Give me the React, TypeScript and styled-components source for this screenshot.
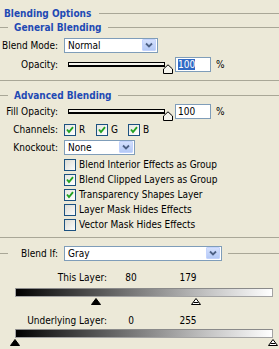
import React from 'react';
import styled, { createGlobalStyle } from 'styled-components';

const GlobalStyle = createGlobalStyle`
  html, body {
    margin: 0;
    padding: 0;
    background: #ece9d8;
  }
  body {
    font-family: "DejaVu Sans Condensed", "Liberation Sans", sans-serif;
    font-size: 10px;
    color: #000;
  }
`;

const Panel = styled.div`
  width: 279px;
  height: 349px;
  overflow: hidden;
  display: flex;
  flex-direction: column;
  background: #ece9d8;
`;

const Rule = styled.div<{ $w?: number }>`
  height: 1px;
  background: #a9a797;
  flex: ${(p) => (p.$w ? `0 0 ${p.$w}px` : '1')};
`;

const TitleRow = styled.div`
  display: flex;
  align-items: center;
  height: 15px;
  margin-top: 6px;
  padding-left: 4px;
`;

const Heading = styled.span<{ $gap?: number }>`
  font-weight: bold;
  color: #1f4ab4;
  white-space: nowrap;
  margin: 0 ${(p) => p.$gap ?? 8}px 0 ${(p) => p.$gap ?? 0}px;
`;

const GroupRow = styled.div<{ $top: number }>`
  display: flex;
  align-items: center;
  height: 12px;
  margin-top: ${(p) => p.$top}px;
`;

const FieldRow = styled.div<{ $top: number; $h?: number }>`
  display: flex;
  align-items: center;
  height: ${(p) => p.$h ?? 14}px;
  margin-top: ${(p) => p.$top}px;
`;

const Label = styled.span<{ $w?: number }>`
  width: ${(p) => p.$w ?? 58}px;
  flex: none;
  text-align: right;
  margin-right: 6px;
  white-space: nowrap;
`;

const SelectBox = styled.div<{ $w: number }>`
  box-sizing: border-box;
  width: ${(p) => p.$w}px;
  height: 15px;
  border: 1px solid #7f9db9;
  background: #fff;
  display: flex;
  align-items: center;
  justify-content: space-between;
  padding: 0 1px 0 3px;
  flex: none;
`;

const ArrowButton = styled.div`
  box-sizing: border-box;
  width: 14px;
  height: 12px;
  border: 1px solid #c3d3fd;
  border-radius: 1px;
  background: linear-gradient(#d4e0fd, #b4c9f6);
  display: flex;
  align-items: center;
  justify-content: center;
`;

const Select = ({ value, width }: { value: string; width: number }) => (
  <SelectBox $w={width}>
    <span>{value}</span>
    <ArrowButton>
      <svg width="8" height="6" viewBox="0 0 8 6">
        <path d="M1 1.5 L4 4.5 L7 1.5" fill="none" stroke="#4d6185" strokeWidth="1.8" />
      </svg>
    </ArrowButton>
  </SelectBox>
);

const SliderWrap = styled.div`
  position: relative;
  width: 106px;
  height: 14px;
  flex: none;
  display: flex;
  align-items: center;
`;

const SliderTrack = styled.div`
  box-sizing: border-box;
  margin-left: 4px;
  width: 97px;
  height: 5px;
  border: 1px solid #000;
  border-bottom-width: 2px;
  background: #f6f5ee;
  margin-top: -1px;
`;

const SliderKnob = styled.svg`
  position: absolute;
  left: 99px;
  top: 6px;
`;

const Slider = () => (
  <SliderWrap>
    <SliderTrack />
    <SliderKnob width="10" height="10" viewBox="0 0 10 10">
      <path d="M0.5 9.5 V5 L5 0.8 L9.5 5 V9.5 Z" fill="#f6f5ee" stroke="#000" strokeWidth="1" />
    </SliderKnob>
  </SliderWrap>
);

const NumberBox = styled.div`
  box-sizing: border-box;
  width: 36px;
  height: 15px;
  margin-left: 5px;
  border: 1px solid #7f9db9;
  background: #fff;
  padding-left: 2px;
  display: flex;
  align-items: center;
  flex: none;
`;

const Selected = styled.span`
  background: #316ac5;
  color: #fff;
`;

const Percent = styled.span`
  margin-left: 5px;
`;

const Box = styled.div<{ $on: boolean }>`
  box-sizing: border-box;
  width: 12px;
  height: 12px;
  border: 1px solid #1c5180;
  background: ${(p) =>
    p.$on ? 'linear-gradient(135deg, #e6e6e0, #ffffff)' : 'linear-gradient(135deg, #dcdcd5, #fbfbfa)'};
  display: flex;
  align-items: center;
  justify-content: center;
  flex: none;
`;

const CheckBox = ({ on }: { on: boolean }) => (
  <Box $on={on}>
    {on && (
      <svg width="8" height="8" viewBox="0 0 8 8">
        <path d="M1 3.5 L3 6 L7 1.2" fill="none" stroke="#21a121" strokeWidth="1.9" />
      </svg>
    )}
  </Box>
);

const ChannelItem = styled.div`
  width: 32px;
  display: flex;
  align-items: center;
  gap: 3px;
  flex: none;
`;

const CheckList = styled.div`
  display: flex;
  flex-direction: column;
  padding-left: 64px;
  margin-top: 3px;
`;

const CheckRow = styled.div`
  height: 15px;
  display: flex;
  align-items: center;
  gap: 3px;
  white-space: nowrap;
`;

const Separator = styled.div<{ $top: number }>`
  height: 1px;
  background: #a9a797;
  margin-top: ${(p) => p.$top}px;
  flex: none;
`;

const ValueCell = styled.span<{ $left: number }>`
  width: 42px;
  margin-left: ${(p) => p.$left}px;
  text-align: center;
`;

const GradientBar = styled.div<{ $top: number }>`
  box-sizing: border-box;
  margin-top: ${(p) => p.$top}px;
  margin-left: 15px;
  width: 258px;
  height: 9px;
  border: 1px solid #a3a3a3;
  border-top-color: #8a8a8a;
  background: linear-gradient(to right, #000 0%, #222 12%, #777 45%, #c4c4c4 75%, #fff 100%);
  flex: none;
`;

const ThumbTrack = styled.div`
  position: relative;
  margin-left: 15px;
  width: 258px;
  height: 8px;
  flex: none;
`;

const Thumb = styled.svg`
  position: absolute;
  top: 1px;
`;

const BAR_W = 258;

const Thumbs = ({ low, high }: { low: number; high: number }) => (
  <ThumbTrack>
    <Thumb width="10" height="7" viewBox="0 0 10 7" style={{ left: (low / 255) * BAR_W - 5 }}>
      <path d="M5 0.5 L9.5 6.5 H0.5 Z" fill="#000" stroke="#000" strokeWidth="1" />
    </Thumb>
    <Thumb width="10" height="7" viewBox="0 0 10 7" style={{ left: (high / 255) * BAR_W - 5 }}>
      <path d="M5 0.5 L9.5 6.5 H0.5 Z" fill="#fff" stroke="#000" strokeWidth="1" />
      <path d="M2.5 4.5 H7.5" stroke="#000" strokeWidth="1" />
    </Thumb>
  </ThumbTrack>
);

const App: React.FC = () => {
  const options = [
    { label: 'Blend Interior Effects as Group', on: false },
    { label: 'Blend Clipped Layers as Group', on: true },
    { label: 'Transparency Shapes Layer', on: true },
    { label: 'Layer Mask Hides Effects', on: false },
    { label: 'Vector Mask Hides Effects', on: false },
  ];

  return (
    <>
      <GlobalStyle />
      <Panel>
        <TitleRow>
          <Heading>Blending Options</Heading>
          <Rule />
        </TitleRow>
        <GroupRow $top={0}>
          <Rule $w={8} />
          <Heading $gap={6}>General Blending</Heading>
          <Rule />
        </GroupRow>

        <FieldRow $top={5}>
          <Label>Blend Mode:</Label>
          <Select value="Normal" width={94} />
        </FieldRow>
        <FieldRow $top={5} $h={15}>
          <Label>Opacity:</Label>
          <Slider />
          <NumberBox>
            <Selected>100</Selected>
          </NumberBox>
          <Percent>%</Percent>
        </FieldRow>

        <Separator $top={8} />

        <GroupRow $top={8}>
          <Rule $w={8} />
          <Heading $gap={6}>Advanced Blending</Heading>
          <Rule />
        </GroupRow>

        <FieldRow $top={3} $h={15}>
          <Label>Fill Opacity:</Label>
          <Slider />
          <NumberBox>100</NumberBox>
          <Percent>%</Percent>
        </FieldRow>
        <FieldRow $top={4} $h={13}>
          <Label>Channels:</Label>
          {['R', 'G', 'B'].map((c) => (
            <ChannelItem key={c}>
              <CheckBox on />
              <span>{c}</span>
            </ChannelItem>
          ))}
        </FieldRow>
        <FieldRow $top={4}>
          <Label>Knockout:</Label>
          <Select value="None" width={71} />
        </FieldRow>

        <CheckList>
          {options.map((o) => (
            <CheckRow key={o.label}>
              <CheckBox on={o.on} />
              <span>{o.label}</span>
            </CheckRow>
          ))}
        </CheckList>

        <Separator $top={5} />

        <FieldRow $top={8}>
          <Rule $w={8} />
          <Label $w={50}>Blend If:</Label>
          <Select value="Gray" width={158} />
          <Rule style={{ marginLeft: 6 }} />
        </FieldRow>

        <FieldRow $top={10}>
          <Label $w={107} style={{ marginRight: 0 }}>This Layer:</Label>
          <ValueCell $left={3}>80</ValueCell>
          <ValueCell $left={15}>179</ValueCell>
        </FieldRow>
        <GradientBar $top={4} />
        <Thumbs low={80} high={179} />

        <FieldRow $top={8}>
          <Label $w={107} style={{ marginRight: 0 }}>Underlying Layer:</Label>
          <ValueCell $left={3}>0</ValueCell>
          <ValueCell $left={15}>255</ValueCell>
        </FieldRow>
        <GradientBar $top={2} />
        <Thumbs low={0} high={255} />
      </Panel>
    </>
  );
};

export default App;
